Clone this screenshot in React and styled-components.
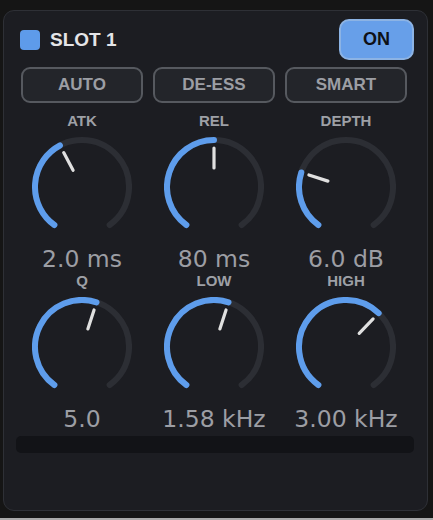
import React from "react";
import styled, { createGlobalStyle } from "styled-components";

const Global = createGlobalStyle`
  html, body { margin: 0; padding: 0; background: #a9a9a9; }
  * { box-sizing: border-box; }
`;

const Page = styled.div`
  width: 433px;
  height: 518px;
  background: #151515;
  padding: 10px 6px 7px 3px;
  display: flex;
`;

const Panel = styled.div`
  flex: 1;
  background: #1c1d22;
  border: 1px solid #2e3036;
  border-radius: 11px;
  padding: 8px 13px 0 12px;
  display: flex;
  flex-direction: column;
  font-family: "Liberation Sans", Arial, sans-serif;
`;

const Header = styled.div`
  display: flex;
  align-items: center;
  justify-content: space-between;
  height: 41px;
  padding-left: 4px;
`;

const Title = styled.div`
  display: flex;
  align-items: center;
  gap: 10px;
  color: #e4e5e8;
  font-weight: 700;
  font-size: 19px;
`;

const Swatch = styled.span`
  width: 20px;
  height: 20px;
  border-radius: 4px;
  background: #5e9bea;
`;

const OnButton = styled.button`
  width: 75px;
  height: 41px;
  border-radius: 10px;
  border: 2px solid #8cb3e4;
  background: #679fe9;
  color: #0e1116;
  font-family: inherit;
  font-weight: 700;
  font-size: 18px;
  padding: 0;
`;

const Grid = styled.div`
  display: grid;
  grid-template-columns: repeat(3, 132px);
  margin-top: ${(p) => p.$top || 0}px;
`;

const ModeButton = styled.button`
  margin: 0 5px;
  height: 36px;
  border-radius: 9px;
  border: 2px solid #56595f;
  background: #23252a;
  color: #9c9ea4;
  font-family: inherit;
  font-weight: 700;
  font-size: 17px;
  padding: 0;
`;

const Cell = styled.div`
  display: flex;
  flex-direction: column;
  align-items: center;
`;

const Label = styled.div`
  font-size: 15px;
  line-height: 16px;
  font-weight: 700;
  color: #9ea0a6;
  margin-bottom: 8px;
`;

const Value = styled.div`
  font-family: "DejaVu Sans", Verdana, sans-serif;
  font-size: 23.5px;
  line-height: 28px;
  color: #9c9ea4;
  margin-top: 16px;
  white-space: nowrap;
`;

const Meter = styled.div`
  margin-top: 3px;
  height: 17px;
  border-radius: 5px;
  background: #121317;
  width: 398px;
`;

const START = -144;
const END = 144;
const CX = 50;
const CY = 50;
const R = 47;

function pt(a, r) {
  const rad = (a * Math.PI) / 180;
  return [CX + r * Math.sin(rad), CY - r * Math.cos(rad)];
}

function arc(a0, a1) {
  const [x0, y0] = pt(a0, R);
  const [x1, y1] = pt(a1, R);
  const large = a1 - a0 > 180 ? 1 : 0;
  return `M ${x0} ${y0} A ${R} ${R} 0 ${large} 1 ${x1} ${y1}`;
}

function Knob({ angle }) {
  const [px0, py0] = pt(angle, 19);
  const [px1, py1] = pt(angle, 39);
  return (
    <svg width="100" height="92" viewBox="0 0 100 92">
      <path d={arc(START, END)} fill="none" stroke="#2c2e34" strokeWidth="6" strokeLinecap="round" />
      <path d={arc(START, angle)} fill="none" stroke="#5e9dec" strokeWidth="6" strokeLinecap="round" />
      <line x1={px0} y1={py0} x2={px1} y2={py1} stroke="#e0e0e0" strokeWidth="3.2" strokeLinecap="round" />
    </svg>
  );
}

const row1 = [
  { label: "ATK", value: "2.0 ms", angle: -28 },
  { label: "REL", value: "80 ms", angle: 0 },
  { label: "DEPTH", value: "6.0 dB", angle: -72 },
];
const row2 = [
  { label: "Q", value: "5.0", angle: 18 },
  { label: "LOW", value: "1.58 kHz", angle: 18 },
  { label: "HIGH", value: "3.00 kHz", angle: 44 },
];

function KnobRow({ items, top }) {
  return (
    <Grid $top={top}>
      {items.map((k) => (
        <Cell key={k.label}>
          <Label>{k.label}</Label>
          <Knob angle={k.angle} />
          <Value>{k.value}</Value>
        </Cell>
      ))}
    </Grid>
  );
}

export default function App() {
  return (
    <>
      <Global />
      <Page>
        <Panel>
          <Header>
            <Title>
              <Swatch />
              SLOT 1
            </Title>
            <OnButton>ON</OnButton>
          </Header>
          <Grid $top={7}>
            <ModeButton>AUTO</ModeButton>
            <ModeButton>DE-ESS</ModeButton>
            <ModeButton>SMART</ModeButton>
          </Grid>
          <KnobRow items={row1} top={10} />
          <KnobRow items={row2} top={0} />
          <Meter />
        </Panel>
      </Page>
    </>
  );
}
